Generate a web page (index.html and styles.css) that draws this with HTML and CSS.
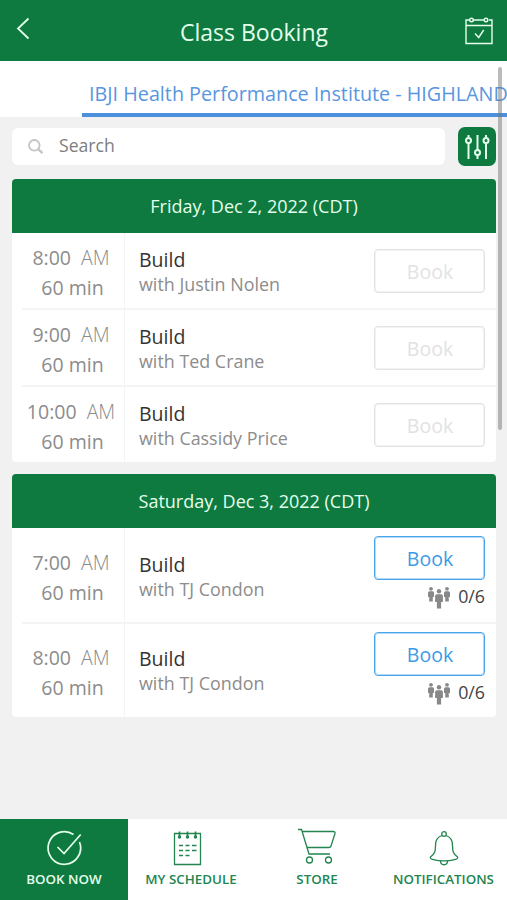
FILE: index.html
```html
<!DOCTYPE html>
<html lang="en">
<head>
<meta charset="utf-8">
<title>Class Booking</title>
<link rel="stylesheet" href="styles.css">
</head>
<body>
<svg width="0" height="0" class="defs">
  <symbol id="people" viewBox="0 0 24 24">
    <g id="person"><circle cx="4" cy="2.800" r="1.900"/><path d="M2.500 5.300h3q1.500 0 1.500 1.500V11H5.800v4.500H2.200V11H1V6.800Q1 5.300 2.500 5.300z"/></g>
    <use href="#person" x="16"/>
    <circle cx="12" cy="5.300" r="2.200"/><path d="M10 8.300h4q1.900 0 1.900 1.800v6h-1.800V22.500H9.900v-6.400H8.100v-6Q8.100 8.300 10 8.300z"/>
  </symbol>
</svg>
<div class="app">
  <header class="topbar">
    <svg class="back" width="16" height="24" viewBox="0 0 16 24"><path d="M13.500 2.500L3 12.500l10.500 10"/></svg>
    <h1>Class Booking</h1>
    <svg class="cal" width="30" height="30" viewBox="0 0 30 30"><path d="M5 4H2v23.500h26V4h-3M9 4h12M2 9.500h26M11 17.500l3.700 4 5-7.500"/><circle cx="7.500" cy="4" r="1.800"/><circle cx="22" cy="4" r="1.800"/></svg>
  </header>
  <nav class="tabs"><div class="tab"><span>IBJI Health Performance Institute - HIGHLAND</span></div></nav>
  <main>
    <div class="tools">
      <label class="search">
        <svg width="18" height="18" viewBox="0 0 18 18"><circle cx="7.300" cy="7.300" r="5.300"/><path class="handle" d="M11.200 11.200l4.300 4"/></svg>
        <span>Search</span>
      </label>
      <button class="filter"><svg width="26" height="28" viewBox="0 0 26 28"><path d="M4.500 2v2.500M4.500 9v17M13.500 2v15M13.500 22v4M22 2v2.500M22 9v17"/><circle cx="4.500" cy="7.500" r="2.500"/><circle cx="13.500" cy="19.500" r="2.500"/><circle cx="22" cy="7.500" r="2.500"/></svg></button>
    </div>

    <section class="card">
      <h2>Friday, Dec 2, 2022 (CDT)</h2>
      <article class="row">
        <div class="time"><p class="start">8:00 <span>AM</span></p><p>60 min</p></div>
        <div class="info"><h3>Build</h3><p>with Justin Nolen</p></div>
        <div class="action"><button class="book off">Book</button></div>
      </article>
      <article class="row">
        <div class="time"><p class="start">9:00 <span>AM</span></p><p>60 min</p></div>
        <div class="info"><h3>Build</h3><p>with Ted Crane</p></div>
        <div class="action"><button class="book off">Book</button></div>
      </article>
      <article class="row">
        <div class="time"><p class="start">10:00 <span>AM</span></p><p>60 min</p></div>
        <div class="info"><h3>Build</h3><p>with Cassidy Price</p></div>
        <div class="action"><button class="book off">Book</button></div>
      </article>
    </section>

    <section class="card open">
      <h2>Saturday, Dec 3, 2022 (CDT)</h2>
      <article class="row">
        <div class="time"><p class="start">7:00 <span>AM</span></p><p>60 min</p></div>
        <div class="info"><h3>Build</h3><p>with TJ Condon</p></div>
        <div class="action"><button class="book">Book</button><div class="spots"><svg width="24" height="24"><use href="#people"/></svg><span>0/6</span></div></div>
      </article>
      <article class="row">
        <div class="time"><p class="start">8:00 <span>AM</span></p><p>60 min</p></div>
        <div class="info"><h3>Build</h3><p>with TJ Condon</p></div>
        <div class="action"><button class="book">Book</button><div class="spots"><svg width="24" height="24"><use href="#people"/></svg><span>0/6</span></div></div>
      </article>
    </section>
  </main>
  <div class="scrollbar"></div>
  <footer class="bottom">
    <a class="item active"><svg width="40" height="40" viewBox="0 0 40 40"><path class="thick" d="M29.500 6.500A16.300 16.300 0 1 0 35.500 14M13.500 19l6.500 6.500L36.700 6.500"/></svg><span>BOOK NOW</span></a>
    <a class="item sched"><svg width="40" height="40" viewBox="0 0 40 40"><path d="M6.500 5.500h26v31h-26z"/><path class="thick" d="M11.500 3.500v6M19.500 3.500v6M27.500 3.500v6"/><path class="thick" d="M11 17.500h4M17.500 17.500h4M24 17.500h4.500M11 22.500h4M17.500 22.500h4M24 22.500h4.500M11 27.500h4M17.500 27.500h4"/><circle class="dot" cx="11.500" cy="9" r="1.700"/><circle class="dot" cx="19.500" cy="9" r="1.700"/><circle class="dot" cx="27.500" cy="9" r="1.700"/></svg><span>MY SCHEDULE</span></a>
    <a class="item"><svg width="40" height="40" viewBox="0 0 40 40"><path d="M1 1.500h3.500L12 26h21M5.500 3.500H36q2.500 0 2 2L34 18q-.5 1.500-2 1.500H10"/><circle cx="12.500" cy="32" r="3"/><circle cx="31.500" cy="32" r="3"/></svg><span>STORE</span></a>
    <a class="item"><svg width="40" height="40" viewBox="0 0 40 40"><path d="M18 7.500c-5 1.500-6.500 5-6.500 10 0 6.500-1 8.500-5 11.500-.8 1 .5 2 2 2.300 7 2 16 2 23 0 1.500-.3 2.800-1.300 2-2.300-4-3-5-5-5-11.500 0-5-1.500-8.500-6.500-10"/><circle cx="20" cy="6" r="2.300"/><path d="M16.500 33c0 5 7 5 7 0"/></svg><span>NOTIFICATIONS</span></a>
  </footer>
</div>
</body>
</html>
```
FILE: styles.css
```css
* { box-sizing: border-box; margin: 0; padding: 0; }
body { font-family: "Open Sans", sans-serif; background: #f1f1f1; color: #333; overflow: hidden; }
svg { fill: none; stroke: currentColor; flex: none; }
button { font: inherit; }
.defs { position: absolute; }
.app { position: relative; display: flex; flex-direction: column; width: 507px; height: 900px; }
.topbar { height: 61px; flex: none; background: #0e7a40; color: #e4ffec; display: grid; grid-template-columns: 60px 1fr 60px; align-items: center; }
.topbar h1 { font-size: 23px; font-weight: 400; text-align: center; line-height: 32px; padding: 3px 0 0 1px; }
.back { margin-left: 15px; margin-top: -5px; stroke-width: 1.8; }
.cal { margin-left: 17px; stroke-width: 1.4; }
.tabs { height: 56px; flex: none; background: #fff; padding-left: 82px; overflow: hidden; }
.tab { height: 56px; border-bottom: 4px solid #4b8fdd; color: #5896e0; font-size: 19.75px; line-height: 65px; padding-left: 7px; white-space: nowrap; overflow: hidden; }
main { flex: 1; padding: 10px 11px 0 12px; }
.tools { display: flex; justify-content: space-between; align-items: center; height: 40px; }
.search { width: 433px; height: 37px; margin-top: -2px; background: #fff; border-radius: 6px; display: flex; align-items: center; padding-left: 15px; color: #7d7d7d; font-size: 17.6px; }
.search svg { color: #c4c4c4; stroke-width: 1.8; margin: 2px 14px 0 0; }
.search .handle { stroke-width: 2.4; }
.search span { margin-top: -2px; }
.filter { width: 38px; height: 39px; margin-top: -1px; border: 0; border-radius: 7px; background: #0e7a40; color: #e4ffec; display: flex; align-items: center; justify-content: center; }
.filter svg { stroke-width: 2; }
.card { margin-top: 12px; border-radius: 4px; overflow: hidden; background: #fff; }
.card h2 { height: 54px; line-height: 54px; background: #0e7a40; color: #e4ffec; text-align: center; font-size: 18px; font-weight: 400; }
.row { height: 77px; display: grid; grid-template-columns: 113px 1fr 122px; background: linear-gradient(#f3f4f4, #f3f4f4) 10px 100% / 100% 2px no-repeat; }
.row:last-child { height: 75px; background: none; }
.open .row { height: 96px; }
.open .row:last-child { height: 93px; }
.time { border-right: 1px solid #f3f5f5; text-align: center; color: #8c8c8c; font-size: 19.5px; line-height: 29.500px; padding: 10px 0 0 9px; white-space: nowrap; }
.start { margin-left: -3px; }
.time span { font-weight: 300; margin-left: 5px; }
.info { padding: 14px 0 0 14px; line-height: 25px; white-space: nowrap; }
.info h3 { font-size: 19.5px; font-weight: 400; color: #333; }
.info p { font-size: 17.9px; color: #8c8c8c; }
.action { padding: 16px 11px 0 0; }
.open .time { padding-top: 20px; }
.open .info { padding-top: 24px; }
.open .row:last-child .time { padding-top: 19px; }
.open .row:last-child .info { padding-top: 22px; }
.open .action { padding-top: 8px; }
.book { display: block; width: 100%; height: 44px; border: 1px solid #48a5ea; box-shadow: inset 0 0 0 1px #48a5ea66; border-radius: 4px; background: #fff; color: #3b9be6; font-size: 19.5px; line-height: 42px; padding: 1px 0 0 1px; }
.off { border-color: #e2e2e2; box-shadow: inset 0 0 0 1px #e2e2e266; color: #e2e2e2; }
.spots { display: flex; justify-content: flex-end; align-items: center; height: 24px; margin-top: 4px; font-size: 17.8px; color: #444; gap: 7px; }
.spots svg { fill: #888; stroke: none; margin-top: 3px; }
.scrollbar { position: absolute; right: 5px; top: 67px; width: 4px; height: 363px; background: rgba(120,120,120,.5); border-radius: 2px; }
.bottom { height: 81px; flex: none; display: grid; grid-template-columns: 128px 126px 126px 127px; background: #fff; color: #23854f; font-weight: 600; font-size: 13.35px; }
.item { display: flex; flex-direction: column; align-items: center; padding-top: 9px; line-height: 22px; white-space: nowrap; }
.item svg { stroke-width: 1.3; }
.sched svg { margin-left: -6px; }
.item .thick { stroke-width: 1.7; }
.item .dot { fill: currentColor; stroke: none; }
.active { background: #0e7a40; color: #e4ffec; }
```
